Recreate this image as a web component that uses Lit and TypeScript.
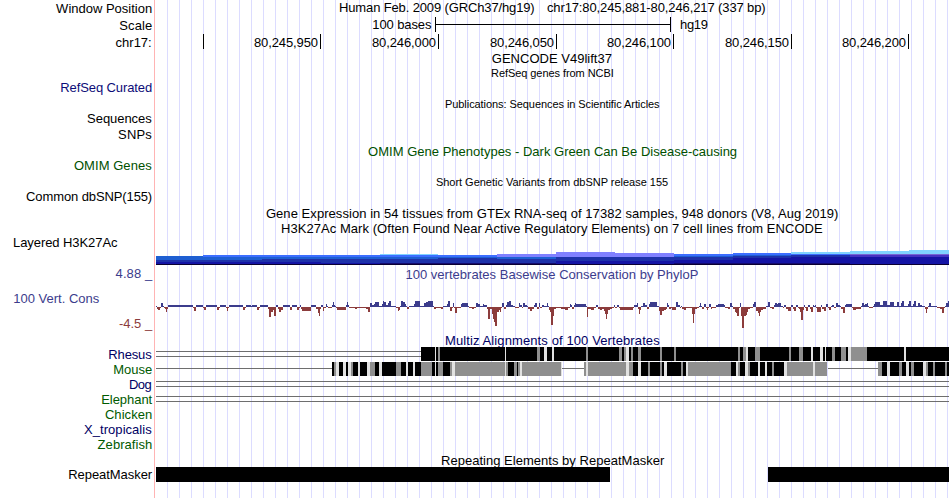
import { LitElement, html, svg, css } from "lit";
import { customElement, property } from "lit/decorators.js";

/** text, left edge, right edge */
type Piece = [string, number, number];
interface Line { h: number; base?: number; tone?: string; small?: boolean; parts: Piece[]; }

const PLOT_X = 155;
const PLOT_W = 795;

const glyphs = (l: Line, origin: number) => {
  const y = l.base ?? l.h - 4;
  return l.parts.map(([t, a, b]) => svg`<text class="${l.tone ?? "ink"} ${l.small ? "small" : ""}"
    x=${a - origin - 0.4} y=${y} textLength=${b - a + 0.6}>${t}</text>`);
};

const LABELS: Line[] = [
  { h: 17, parts: [["Window Position", 56.5, 152]] },
  { h: 17, parts: [["Scale", 119.7, 152]] },
  { h: 17, parts: [["chr17:", 116, 151.5]] },
  { h: 45, tone: "refseq", parts: [["RefSeq Curated", 60.7, 152]] },
  { h: 31, parts: [["Sequences", 87.5, 151.5]] },
  { h: 16, parts: [["SNPs", 118.5, 151.5]] },
  { h: 31, tone: "omim", parts: [["OMIM Genes", 74.3, 151.5]] },
  { h: 31, parts: [["Common dbSNP(155)", 26.5, 152]] },
  { h: 46, parts: [["Layered H3K27Ac", 13.4, 117.3]] },
  { h: 31, tone: "pos", parts: [["4.88 _", 116, 152]] },
  { h: 25, tone: "pos", parts: [["100 Vert. Cons", 13.7, 99]] },
  { h: 25, tone: "neg", parts: [["-4.5 _", 119.3, 152]] },
  { h: 31, tone: "blue", parts: [["Rhesus", 108.7, 151.5]] },
  { h: 15, tone: "green", parts: [["Mouse", 113.7, 152]] },
  { h: 15, tone: "blue", parts: [["Dog", 129.4, 151.5]] },
  { h: 15, tone: "green", parts: [["Elephant", 101.6, 152]] },
  { h: 15, tone: "green", parts: [["Chicken", 105.3, 152]] },
  { h: 15, tone: "blue", parts: [["X_tropicalis", 84.5, 151.5]] },
  { h: 15, tone: "green", parts: [["Zebrafish", 98, 152]] },
  { h: 30, parts: [["RepeatMasker", 68.6, 152]] },
];

const HEAD: Line = { h: 16, parts: [["Human Feb. 2009 (GRCh37/hg19)", 339.4, 534.5], ["chr17:80,245,881-80,246,217 (337 bp)", 547.3, 765.5]] };
const SCALE: Line = { h: 17, base: 13, parts: [["100 bases", 372.7, 431.3], ["hg19", 680.4, 707.7]] };
const RULER: Line = {
  h: 18, base: 14, parts: [
    ["80,245,950", 254.3, 317.9], ["80,246,000", 372.3, 435.9], ["80,246,050", 490.4, 553.9],
    ["80,246,100", 607.4, 670.9], ["80,246,150", 725.4, 788.9], ["80,246,200", 842.4, 905.9],
  ],
};
const TICKS = [203, 320, 438, 556, 673, 791, 908];

const TITLES: Line[] = [
  { h: 16, parts: [["GENCODE V49lift37", 492.2, 611.7]] },
  { h: 14, small: true, parts: [["RefSeq genes from NCBI", 491.4, 613.6]] },
  { h: 31, small: true, parts: [["Publications: Sequences in Scientific Articles", 445.4, 659.4]] },
  { h: 48, tone: "omim", parts: [["OMIM Gene Phenotypes - Dark Green Can Be Disease-causing", 368.5, 736.9]] },
  { h: 30, small: true, parts: [["Short Genetic Variants from dbSNP release 155", 436.3, 667.9]] },
  { h: 32, parts: [["Gene Expression in 54 tissues from GTEx RNA-seq of 17382 samples, 948 donors (V8, Aug 2019)", 266.3, 838.2]] },
  { h: 15, parts: [["H3K27Ac Mark (Often Found Near Active Regulatory Elements) on 7 cell lines from ENCODE", 281.4, 822.5]] },
];
const PHYLOP_TITLE: Line = { h: 15, base: 11, tone: "pos", parts: [["100 vertebrates Basewise Conservation by PhyloP", 405.8, 698.2]] };
const MULTIZ_TITLE: Line = { h: 15, base: 13, tone: "blue", parts: [["Multiz Alignments of 100 Vertebrates", 445.4, 659.5]] };
const RMSK_TITLE: Line = { h: 15, base: 13, parts: [["Repeating Elements by RepeatMasker", 441.4, 664.1]] };

/** Histone signal: start x, then the top of every coloured layer down to the base. */
const C = {
  sky: "#80d2ff", blue: "#3c6eff", lilac: "#8080ff", azure: "#1e5fd2", indigo: "#1e32aa",
  navy: "#1414a5", dusk: "#140a6e", night: "#0a0032", violet: "#4632c3", mauve: "#7864d2",
};
type Layer = [number, string];
const HISTONE: [number, Layer[]][] = [
  [156, [[256, C.azure], [260, C.indigo], [262, C.navy], [264, C.night]]],
  [203, [[255, C.blue], [257, C.azure], [260, C.indigo], [262, C.navy], [264, C.night]]],
  [262, [[255, C.blue], [257, C.azure], [259, C.indigo], [262, C.navy], [264, C.night]]],
  [321, [[255, C.blue], [257, C.azure], [259, C.indigo], [263, C.navy], [264, C.night]]],
  [380, [[254, C.sky], [255, C.blue], [257, C.azure], [259, C.indigo], [263, C.dusk], [264, C.night]]],
  [438, [[255, C.blue], [257, C.azure], [258, C.indigo], [263, C.dusk], [264, C.night]]],
  [497, [[254, C.lilac], [257, C.azure], [259, C.indigo], [263, C.dusk], [264, C.night]]],
  [556, [[252, C.lilac], [257, C.indigo], [261, C.navy], [264, C.night]]],
  [615, [[253, C.lilac], [257, C.indigo], [261, C.navy], [264, C.night]]],
  [674, [[254, C.blue], [256, C.azure], [257, C.indigo], [260, C.navy], [263, C.dusk], [264, C.night]]],
  [733, [[253, C.blue], [255, C.azure], [256, C.indigo], [258, C.navy], [263, C.dusk], [264, C.night]]],
  [791, [[252, C.sky], [254, C.blue], [255, C.indigo], [257, C.navy], [263, C.dusk], [264, C.night]]],
  [850, [[251, C.sky], [254, C.mauve], [255, C.violet], [257, C.navy], [264, C.night]]],
  [909, [[250, C.sky], [254, C.mauve], [255, C.violet], [257, C.navy], [264, C.night]]],
];

/** Conservation score as x:value steps; every value holds until the next x. */
const PHYLOP = `156:1 157:-2 158:-3 160:-1 161:4 163:1 164:-1 165:-2 166:-5 167:-2 168:2 193:-1 194:-4 196:2 203:-1 204:-3 206:2 217:-3 219:-1 220:2 226:-1 227:-4 228:-1 229:2 243:-3 245:-1 246:2 251:1 252:2 257:-3 259:-1 260:2
268:-2 269:-10 271:-5 273:-3 274:-9 276:2 278:-2 279:-5 281:-3 283:2 290:-3 292:2 297:-3 299:-1 300:2 301:-2 302:-4 311:2 316:-2 318:-6 319:-9 320:-2 321:2 323:-4 324:-1 326:3 327:1 328:-1 332:2 333:5 334:2 335:1 336:-1 337:-3 346:2 347:5 348:2 349:-1 355:-2 357:-1 366:-2 368:-5 370:4 372:2 374:3 375:5 379:1 382:3 383:6 384:5 386:2 388:4 389:6 391:1 396:-1 398:-4 399:-3 400:1 401:6 403:5 405:3 406:1 407:-2 409:1 414:3
415:6 420:1 424:4 426:5 428:6 433:1 434:-2 436:-1 441:-2 443:1 447:3 448:6 450:-4 452:-1 453:4 454:-1 455:-6 457:-1 461:3 462:4 468:1 469:-1 472:-2 474:-1 476:4 478:3 480:1 483:3 484:2 487:-2 488:-12 490:-2 492:-7 493:-12 494:-15 495:-19 497:-5 499:-3 500:-5 501:-1 502:4 504:-2 506:2 507:5 509:6 511:2 513:1 515:-1 519:4 520:2 522:-1 523:4 525:2 527:1 528:-2 530:-4 532:-2 534:2 535:4 537:-2 539:4 540:-1 542:2 544:1 547:4 548:1 549:-3 550:-5 551:-18 553:-9 554:-2 556:-1 561:-2 565:-3 568:-1 570:3 571:2 572:-2 574:2 575:4 576:3 586:1 587:-10 588:-2 591:-3 594:-1 596:2 598:-2 600:-3 602:-2 604:-4 605:-7 606:-12 607:-7 608:-3 610:-2 612:-1 614:2 615:-1 617:2 619:-1 620:-3 633:-1 634:2 637:4 638:-2 639:-7 640:-3 641:1 643:4 645:2 647:-2 649:3 650:5 657:1 659:-4 660:-8 662:-4 664:-3 666:-2 667:4 668:2 669:-2 671:-1 672:-3 676:5 678:2
680:-1 681:1 682:-2 684:-3 686:-1 692:-7 693:-16 694:-7 695:-2 697:-1 699:1 700:4 701:1 702:-2 704:3 706:-1 707:-3 708:-1 709:3 711:-2 712:-1 716:2 718:3 724:2 725:-1 728:-2 730:4 732:1 733:-2 735:-5 736:-6 737:-9 739:-1 740:4 741:-9 742:-21 744:-9 746:-8 747:-5 748:-2 750:-1 753:3 754:5 756:-4 758:-6 759:-9 760:-5 761:-3 763:-2 766:1 768:5 770:-1 772:-2 774:2 775:4 777:3 778:4 781:1 783:-1 784:2 786:-2 788:-4 791:2 793:-2 794:-4 796:2 798:-1 799:-2 800:-5 801:-13 803:-3 804:2 805:-1 806:-4 808:2 810:-2 811:-5 813:2 814:1 815:2 816:-1 817:-5 821:2 822:-2 824:-4 826:3 828:-1 829:-3 831:1 832:2 834:-1 836:4 838:2 840:1 841:-2 843:-6 845:2 846:3 852:-1 853:-3 856:-2 861:1 862:4 864:2 865:3 867:4 868:1 869:-1 873:1 874:3 875:5 880:2 883:6 887:2 890:5 894:1 897:5 899:1 901:4 902:6 904:1 908:3 909:6 911:1 913:3 914:6 916:1 918:4 920:2 922:1 925:-2 926:-6 927:-2 928:1 929:4 931:1 937:-1 940:-2 942:-6 944:-1 945:1 946:4 948:6`
  .trim().split(/\s+/).map((s) => s.split(":").map(Number) as [number, number]);

interface Align { h: number; blocks?: [number, number][]; rules: [number, number, number][]; gray?: string; pale?: string; }
const ALIGN: Align[] = [
  {
    h: 15, blocks: [[421, 949]], rules: [[4, 156, 421], [9, 156, 421]],
    gray: "438:2 537:3 586:2 619:3 624:2 631:2 638:3 660:2 674:2 738:2 743:3 755:5 789:2 799:4 832:3 841:5 851:16",
    pale: "435:1 505:1 544:3 552:2 626:3 746:2 811:2 820:3 825:1 848:3 904:2",
  },
  {
    h: 15, blocks: [[332, 561], [584, 827], [878, 949]], rules: [[6, 156, 332], [6, 562, 584], [6, 828, 878]],
    gray: "334:2 351:2 370:5 396:5 421:11 438:5 450:2 455:50 506:2 514:3 518:2 522:39 584:2 588:38 629:4 648:2 660:2 681:2 688:43 738:2 748:2 772:2 787:26 815:12 878:4 899:3 911:3 926:2 933:2 945:2",
    pale: "336:3 343:3 348:3 358:2 367:3 379:3 406:2 413:2 435:1 452:3 505:1 520:2 561:1 586:2 626:3 638:3 664:3 686:2 736:2 745:3 758:2 765:2 784:3 813:2 887:3 906:3 923:3",
  },
  { h: 15, rules: [[4, 156, 949], [9, 156, 949]] },
  { h: 60, rules: [[4, 156, 949], [9, 156, 949]] },
];

const bar = (cls: string, x: number, y: number, w: number, h: number) =>
  svg`<rect class=${cls} x=${x - PLOT_X} y=${y} width=${w} height=${h}></rect>`;

const marks = (cls: string, list = "") => list.split(" ").filter(Boolean).map((s) => {
  const [x, w] = s.split(":").map(Number);
  return bar(cls, x, 0, w, 14);
});

const band = css`
  :host { display: block; font-family: "Liberation Sans", Arial, sans-serif; }
  svg { display: block; overflow: visible; shape-rendering: crispEdges; }
  text { font-size: 13px; white-space: pre; }
  text.small { font-size: 11px; }
  .ink { fill: #000; }
  .refseq { fill: #0c0c78; }
  .omim { fill: #005000; }
  .pos { fill: #3c3c8c; }
  .neg { fill: #8c3c3c; }
  .blue { fill: #000064; }
  .green { fill: #005a00; }
  .rule { fill: #6e6e6e; }
  .gray { fill: #8f8f8f; }
  .pale { fill: #e1e1e1; }
`;

@customElement("track-labels")
export class TrackLabels extends LitElement {
  static styles = band;
  render() {
    return LABELS.map((l) => html`<svg width="154" height=${l.h}>${glyphs(l, 0)}</svg>`);
  }
}

@customElement("track-title")
export class TrackTitle extends LitElement {
  static styles = band;
  @property({ attribute: false }) line!: Line;
  render() {
    return html`<svg width=${PLOT_W} height=${this.line.h}>${glyphs(this.line, PLOT_X)}</svg>`;
  }
}

@customElement("genome-ruler")
export class GenomeRuler extends LitElement {
  static styles = band;
  render() {
    return html`
      <svg width=${PLOT_W} height=${SCALE.h}>
        ${glyphs(SCALE, PLOT_X)}
        ${bar("ink", 435, 1, 1, 15)}${bar("ink", 436, 8, 234, 1)}${bar("ink", 670, 1, 1, 15)}
      </svg>
      <svg width=${PLOT_W} height=${RULER.h}>
        ${glyphs(RULER, PLOT_X)}
        ${TICKS.map((x) => bar("ink", x, 1, 1, 15))}
      </svg>`;
  }
}

@customElement("histone-track")
export class HistoneTrack extends LitElement {
  static styles = band;
  render() {
    return html`<svg width=${PLOT_W} height="31">
      ${HISTONE.map(([x, layers], i) => {
        const end = HISTONE[i + 1]?.[0] ?? 949;
        return layers.map(([top, fill], k) => svg`<rect x=${x - PLOT_X} y=${top - 237} width=${end - x}
          height=${(layers[k + 1]?.[0] ?? 265) - top} fill=${fill}></rect>`);
      })}
    </svg>`;
  }
}

@customElement("phylop-track")
export class PhylopTrack extends LitElement {
  static styles = band;
  render() {
    const zero = 24;
    return html`<svg width=${PLOT_W} height="49">
      ${PHYLOP.map(([x, v], i) => {
        const w = (PHYLOP[i + 1]?.[0] ?? 949) - x;
        return v > 0 ? bar("pos", x, zero - v, w, v) : bar("neg", x, zero, w, -v);
      })}
    </svg>`;
  }
}

@customElement("alignment-track")
export class AlignmentTrack extends LitElement {
  static styles = band;
  render() {
    return ALIGN.map((a) => html`<svg width=${PLOT_W} height=${a.h}>
      ${a.rules.map(([y, x1, x2]) => bar("rule", x1, y, x2 - x1, 1))}
      ${(a.blocks ?? []).map(([x1, x2]) => bar("ink", x1, 0, x2 - x1, 14))}
      ${marks("gray", a.gray)}${marks("pale", a.pale)}
    </svg>`);
  }
}

@customElement("repeat-track")
export class RepeatTrack extends LitElement {
  static styles = band;
  render() {
    return html`<svg width=${PLOT_W} height="31">
      ${bar("ink", 156, 0, 454, 15)}${bar("ink", 768, 0, 181, 15)}
    </svg>`;
  }
}

@customElement("app-root")
export class AppRoot extends LitElement {
  static styles = css`
    :host { display: block; width: 950px; height: 498px; overflow: hidden; background: #fff; }
    .browser { display: grid; grid-template-columns: 154px 796px; height: 498px; }
    .tracks {
      box-sizing: border-box;
      border-left: 1px solid #ffb4b4;
      background: repeating-linear-gradient(to right, transparent 0 11px, #dcdcff 11px 12px) 1px 0;
    }
  `;
  render() {
    const title = (l: Line) => html`<track-title .line=${l}></track-title>`;
    return html`<main class="browser">
      <track-labels></track-labels>
      <section class="tracks">
        ${title(HEAD)}
        <genome-ruler></genome-ruler>
        ${TITLES.map(title)}
        <histone-track></histone-track>
        ${title(PHYLOP_TITLE)}
        <phylop-track></phylop-track>
        ${title(MULTIZ_TITLE)}
        <alignment-track></alignment-track>
        ${title(RMSK_TITLE)}
        <repeat-track></repeat-track>
      </section>
    </main>`;
  }
}
